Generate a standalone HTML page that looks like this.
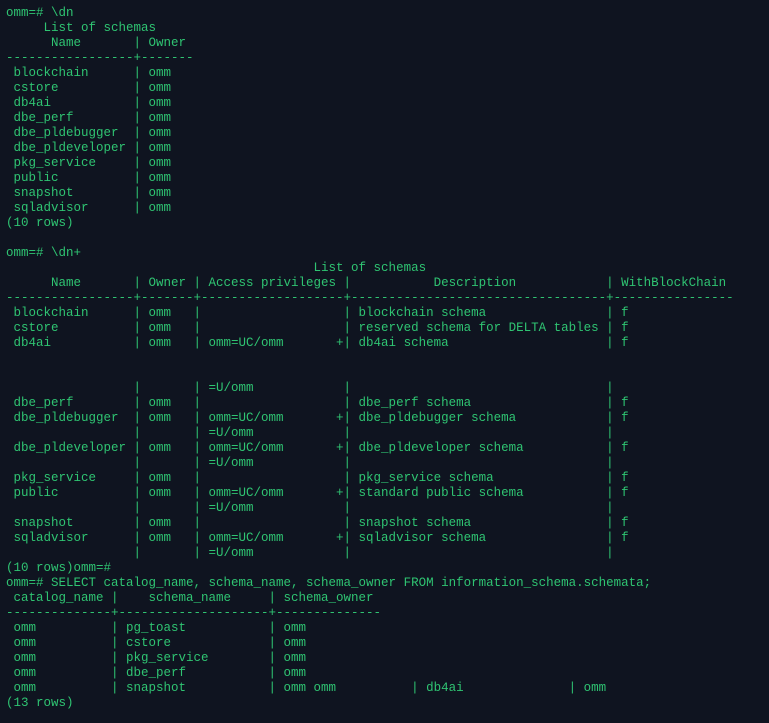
<!DOCTYPE html>
<html><head><meta charset="utf-8"><style>
html,body{margin:0;padding:0;background:#0f1420;width:769px;height:723px;overflow:hidden}
pre{margin:0;padding:6px 0 0 6px;font-family:"Liberation Mono","Courier New",monospace;font-size:12.5px;line-height:15px;color:#2fc472;white-space:pre}
</style></head><body><pre>omm=# \dn
     List of schemas
      Name       | Owner
-----------------+-------
 blockchain      | omm
 cstore          | omm
 db4ai           | omm
 dbe_perf        | omm
 dbe_pldebugger  | omm
 dbe_pldeveloper | omm
 pkg_service     | omm
 public          | omm
 snapshot        | omm
 sqladvisor      | omm
(10 rows)

omm=# \dn+
                                         List of schemas
      Name       | Owner | Access privileges |           Description            | WithBlockChain
-----------------+-------+-------------------+----------------------------------+----------------
 blockchain      | omm   |                   | blockchain schema                | f
 cstore          | omm   |                   | reserved schema for DELTA tables | f
 db4ai           | omm   | omm=UC/omm       +| db4ai schema                     | f


                 |       | =U/omm            |                                  |
 dbe_perf        | omm   |                   | dbe_perf schema                  | f
 dbe_pldebugger  | omm   | omm=UC/omm       +| dbe_pldebugger schema            | f
                 |       | =U/omm            |                                  |
 dbe_pldeveloper | omm   | omm=UC/omm       +| dbe_pldeveloper schema           | f
                 |       | =U/omm            |                                  |
 pkg_service     | omm   |                   | pkg_service schema               | f
 public          | omm   | omm=UC/omm       +| standard public schema           | f
                 |       | =U/omm            |                                  |
 snapshot        | omm   |                   | snapshot schema                  | f
 sqladvisor      | omm   | omm=UC/omm       +| sqladvisor schema                | f
                 |       | =U/omm            |                                  |
(10 rows)omm=#
omm=# SELECT catalog_name, schema_name, schema_owner FROM information_schema.schemata;
 catalog_name |    schema_name     | schema_owner
--------------+--------------------+--------------
 omm          | pg_toast           | omm
 omm          | cstore             | omm
 omm          | pkg_service        | omm
 omm          | dbe_perf           | omm
 omm          | snapshot           | omm omm          | db4ai              | omm
(13 rows)</pre></body></html>
